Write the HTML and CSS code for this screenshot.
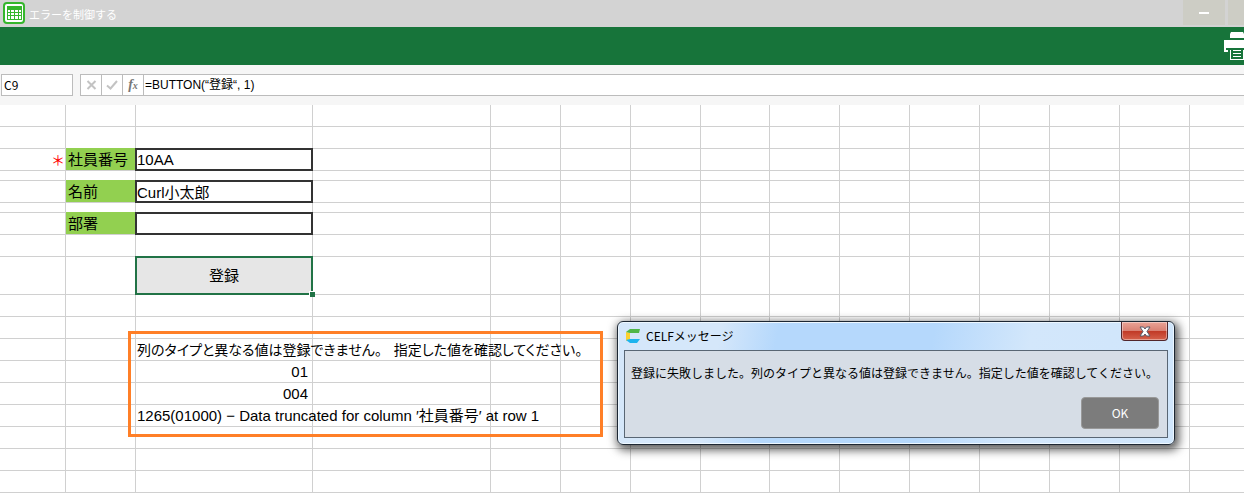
FILE: index.html
```html
<!DOCTYPE html>
<html lang="ja">
<head>
<meta charset="utf-8">
<title>エラーを制御する</title>
<link rel="stylesheet" href="styles.css">
</head>
<body>
<header class="titlebar">
  <svg class="app-icon" width="22" height="22" viewBox="0 0 22 22" aria-hidden="true">
    <rect x="1" y="1" width="20" height="20" rx="3" fill="#fff" stroke="#35b62c" stroke-width="2"/>
    <path d="M4 4h15v14H4z" fill="#35b62c"/>
    <path d="M5 8h2v2H5zM8 8h3v2H8zM12 8h3v2h-3zM16 8h2v2h-2zM5 11h2v2H5zM8 11h3v2H8zM12 11h3v2h-3zM16 11h2v2h-2zM5 14h2v3H5zM8 14h3v3H8zM12 14h3v3h-3zM16 14h2v3h-2z" fill="#fff"/>
  </svg>
  <h1 class="title">エラーを制御する</h1>
  <button class="window-button" aria-label="最小化"><span class="dash"></span></button>
  <button class="window-button window-button-edge" aria-label="最大化"></button>
</header>
<nav class="ribbon">
  <button class="print" aria-label="印刷">
    <svg width="20" height="28" viewBox="0 0 20 28" aria-hidden="true">
      <path d="M6 6V2l1-2h12l1 2v4zM0 8h20v12h-1v-3H3v1h1v2H0zM6 18h14v10H6z" fill="#fff"/>
      <path d="M2 16h18v2H2zM7 18h12v9H7z" fill="#17743a"/>
      <path d="M9 18h8v1H9zM9 21h8v1H9zM9 24h8v1H9z" fill="#fff"/>
    </svg>
  </button>
</nav>
<div class="formula-bar">
  <input class="cell-name" aria-label="セル" value="C9">
  <div class="formula">
    <button class="formula-button" aria-label="キャンセル"><svg width="11" height="10" viewBox="0 0 11 10"><path d="M1.500 1l8 8M9.500 1l-8 8" stroke="#c3c3c3" stroke-width="2"/></svg></button>
    <button class="formula-button" aria-label="確定"><svg width="12" height="10" viewBox="0 0 12 10"><path d="M1 5.500L4.500 8.500 11 1" fill="none" stroke="#c3c3c3" stroke-width="2"/></svg></button>
    <button class="formula-button fx" aria-label="関数">f<small>x</small></button>
    <input class="formula-input" aria-label="数式" value="=BUTTON(“登録“, 1)">
  </div>
</div>
<main class="workspace">
<table class="sheet">
<colgroup><col class="c-a"><col class="c-unit"><col class="c-c"><col class="c-d"><col class="c-unit"><col class="c-unit"><col class="c-unit"><col class="c-g"><col class="c-unit"><col class="c-unit"><col class="c-unit"><col class="c-unit"><col class="c-unit"><col class="c-unit"><col></colgroup>
<tbody>
<tr><td><td><td>
<td><td><td><td><td><td><td><td><td><td><td><td></tr>
<tr><td><td><td>
<td><td><td><td><td><td><td><td><td><td><td><td></tr>
<tr><td class="required">＊<td class="label"><label for="number">社員番号</label><td><input class="field" id="number" value="10AA">
<td><td><td><td><td><td><td><td><td><td><td><td></tr>
<tr class="thin"><td><td><td>
<td><td><td><td><td><td><td><td><td><td><td><td></tr>
<tr><td><td class="label"><label for="name">名前</label><td><input class="field" id="name" value="Curl小太郎">
<td><td><td><td><td><td><td><td><td><td><td><td></tr>
<tr class="thin"><td><td><td>
<td><td><td><td><td><td><td><td><td><td><td><td></tr>
<tr><td><td class="label"><label for="section">部署</label><td><input class="field" id="section">
<td><td><td><td><td><td><td><td><td><td><td><td></tr>
<tr><td><td><td>
<td><td><td><td><td><td><td><td><td><td><td><td></tr>
<tr class="tall"><td><td><td class="selected"><button class="submit">登録</button>
<td><td><td><td><td><td><td><td><td><td><td><td></tr>
<tr><td><td><td>
<td><td><td><td><td><td><td><td><td><td><td><td></tr>
<tr><td><td><td>
<td><td><td><td><td><td><td><td><td><td><td><td></tr>
<tr><td><td><td><span class="sentence">列のタイプと異なる値は登録できません。</span><span class="sentence">指定した値を確認してください。</span>
<td><td><td><td><td><td><td><td><td><td><td><td></tr>
<tr><td><td><td class="number">01
<td><td><td><td><td><td><td><td><td><td><td><td></tr>
<tr><td><td><td class="number">004
<td><td><td><td><td><td><td><td><td><td><td><td></tr>
<tr><td><td><td>1265(01000) − Data truncated for column ′社員番号′ at row 1
<td><td><td><td><td><td><td><td><td><td><td><td></tr>
<tr><td><td><td>
<td><td><td><td><td><td><td><td><td><td><td><td></tr>
<tr><td><td><td>
<td><td><td><td><td><td><td><td><td><td><td><td></tr>
<tr><td><td><td>
<td><td><td><td><td><td><td><td><td><td><td><td></tr>
</tbody>
</table>
<div class="highlight"></div>
<section class="dialog" role="dialog" aria-labelledby="dialog-title">
  <div class="dialog-head">
    <svg width="15" height="16" viewBox="0 0 15 16" aria-hidden="true">
      <path d="M0 4l4 1v6l-4 2z" fill="#fbd12f"/>
      <path d="M0 4L4 1h10l-1 4H4z" fill="#4fb648"/>
      <path d="M0 12l4-1h10l-3 4H4z" fill="#1db4ee"/>
    </svg>
    <h2 class="dialog-title" id="dialog-title">CELFメッセージ</h2>
    <button class="dialog-close" aria-label="閉じる"><svg width="12" height="11" viewBox="0 0 12 11"><path d="M1 1h3.500L6 3l1.500-2H11L8 5.500l3 4.500H7.500L6 8l-1.500 2H1l3-4.500z" fill="#fff" stroke="#555b6b"/></svg></button>
  </div>
  <div class="dialog-body">
    <p class="message">登録に失敗しました。列のタイプと異なる値は登録できません。指定した値を確認してください。</p>
    <button class="ok">OK</button>
  </div>
</section>
</main>
</body>
</html>
```
FILE: styles.css
```css
* { box-sizing: border-box; }

body {
  margin: 0;
  background: #fff;
  color: #000;
  font: 12px/16px "Noto Sans CJK JP", sans-serif;
}

button, input { font: inherit; color: inherit; margin: 0; padding: 0; border: 0; border-radius: 0; }

h1, h2, p { margin: 0; font-weight: 400; }

svg { display: block; flex: none; }

.titlebar { display: flex; align-items: center; height: 27px; padding-left: 3px; background: #d3d3d3; }
.app-icon { margin-bottom: 2px; }
.title { flex: 1; padding-left: 4px; color: #fff; font-size: 11px; }
.window-button { display: flex; align-items: center; justify-content: center; width: 42px; height: 25px; margin: 0 3px 2px 0; background: #cdcdc5; }
.window-button-edge { width: 16px; margin-right: 0; }
.dash { width: 10px; height: 2px; background: #fff; }

.ribbon { display: flex; align-items: center; justify-content: flex-end; height: 38px; background: #17743a; }
.print { background: none; }

.formula-bar { display: flex; gap: 7px; height: 40px; padding: 9px 0 9px 1px; background: #f6f6f6; }
.cell-name { width: 72px; padding-left: 2px; border: 1px solid #bcbcbc; background: #fff; }
.formula { display: flex; flex: 1; border: 1px solid #bcbcbc; border-right: 0; background: #fff; }
.formula-button { display: flex; align-items: center; justify-content: center; width: 21px; border-right: 1px solid #bcbcbc; background: #fff; }
.fx { color: #777; font: italic bold 14px "Liberation Serif", serif; }
.fx small { font-size: 10px; }
.formula-input { flex: 1; min-width: 0; padding-left: 1px; background: transparent; font-family: "Liberation Sans", "Noto Sans CJK JP", sans-serif; }

.workspace { position: relative; }

.sheet { width: 100%; table-layout: fixed; border-collapse: separate; border-spacing: 0; font: 15px/20px "Liberation Sans", "Noto Sans CJK JP", sans-serif; }
.sheet td { height: 22px; padding: 0 0 0 1px; border: 0 solid #d0d0d0; border-width: 0 1px 1px 0; white-space: nowrap; vertical-align: middle; }
.sheet td:last-child { border-right: 0; }
.sheet .thin td { height: 10px; }
.sheet .tall td { height: 38px; }
.c-a { width: 66px; }
.c-unit { width: 70px; }
.c-c { width: 177px; }
.c-d { width: 178px; }
.c-g { width: 69px; }
.sheet .required { color: #f00; text-align: right; font-size: 14px; }
.sheet .label { padding-left: 2px; background: #92d050; box-shadow: 0 -1px #92d050; }
.sentence { margin-right: 12px; font-size: 14px; font-feature-settings: "palt"; }
.sheet td.number { padding-right: 4px; text-align: right; }
.sheet td:has(.field), .sheet td.selected { padding: 0; }
.field { display: block; width: calc(100% + 2px); height: 23px; margin: -1px; border: 2px solid #333; background: #fff; }
.selected { position: relative; }
.submit { display: block; width: calc(100% + 2px); height: 39px; margin: -1px; border: 2px solid #217346; background: #e6e6e6; }
.selected::after { content: ""; position: absolute; right: -3px; bottom: -3px; width: 5px; height: 5px; border: solid #fff; border-width: 1px 0 0 1px; background: #217346; }

.highlight { position: absolute; left: 128px; top: 226px; width: 475px; height: 106px; border: 3px solid #ff7f27; }

.dialog {
  position: absolute;
  left: 617px;
  top: 216px;
  width: 558px;
  padding: 0 6px 6px;
  border: 1px solid #1d2733;
  border-radius: 6px;
  background: linear-gradient(100deg, #d5e7fa 0, #d5e7fa 18%, #b5d8fc 28%, #b5d8fc 55%, #d3e7fb 72%, #cfe5fb 100%);
  box-shadow: inset 0 0 0 1px #edf7ff, 2px 3px 10px 2px rgba(0, 0, 0, .65);
}
.dialog-head { display: flex; align-items: center; gap: 5px; height: 28px; padding-left: 2px; }
.dialog-title { flex: 1; font-size: 12px; }
.dialog-close { display: flex; align-items: center; justify-content: center; align-self: flex-start; width: 47px; height: 19px; border: 1px solid #52262b; border-top: 0; border-radius: 0 0 4px 4px; background: linear-gradient(#eaa396, #d98072 50%, #c13a27 52%, #d5614c); box-shadow: inset 0 0 0 1px rgba(255, 255, 255, .4); }
.dialog-body { display: flex; flex-direction: column; gap: 16px; padding: 14px 8px 8px 6px; border: 1px solid #596674; background: #d6dde6; }
.message { white-space: nowrap; }
.ok { align-self: flex-end; width: 78px; height: 32px; border: 1px solid #999; border-radius: 4px; background: #7c7c7c; color: #fff; }
```
